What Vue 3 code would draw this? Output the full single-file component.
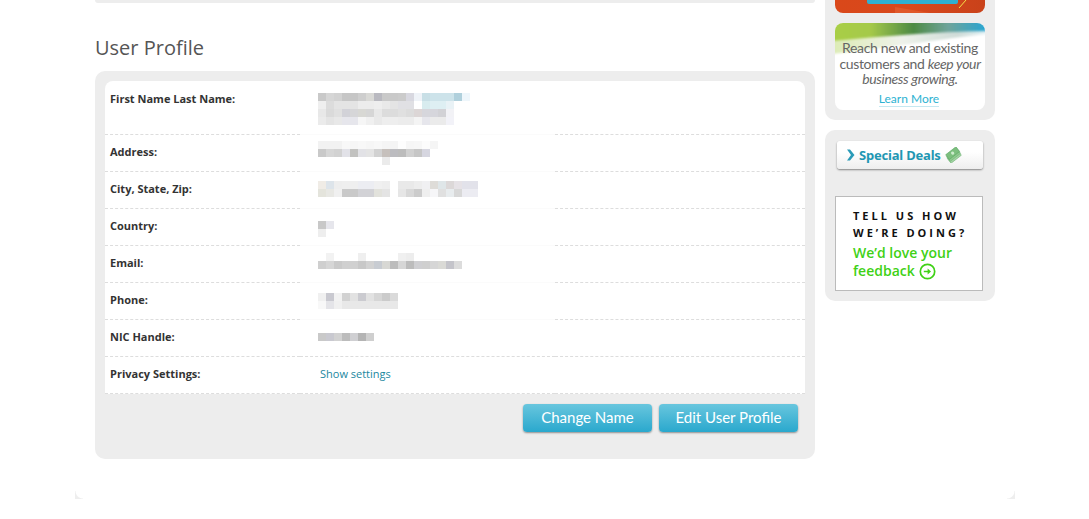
<script setup>
// blurred values are drawn as 8px mosaic cells, one string per line of cells
const cell = 8

const rows = [
  {
    label: 'First Name Last Name:',
    tall: true,
    top: 12,
    cells: [
      'c9c9c9 d6d6d6 d2d2d2 c6c6c6 c6c6c6 cecece d9d9d6 b9b9c0 c9c9c9 c9c9c9 cbcbcb d8d8e0 eff3f8 c8dfe6 cde3ea cde3ea cde3ea b0d0dc eef6fb',
      'efefef dcdcdc e4e4e4 e4e4e4 e4e4e4 ececec ececec eeeeee e9e9e9 e4e4e4 e0e0e4 e0e0e4 ffffff d8ecef deeff3 deeff3 e9f2f6',
      'e8e8e8 dadada e0e0e0 d2d2d8 d6d6d8 d8d8d4 d6d6d6 e8e8e8 dcdcdc dcdcdc e0e0e0 dcdcdc dcd6d6 d6d6dc d6d6dc d2d2d6 f2f2f6',
      'ebebeb e4e4e4 e8e8e8 e6e6ec e6e6ec f6f6f6 f0f0f0 e9e9e9 eeeeee eeeeee ececec ececec f4f4f4 e6e6ec ebebeb ebebeb f2f2f8'
    ]
  },
  {
    label: 'Address:',
    top: 6,
    cells: [
      'f2f2f2 f2f2f2 f2f2f2 f8f8f8 f6f6f6 f8f8f8 f6f6f6 f8f8f8 f5f5f5 f4f4f4 fdfdfd f6f6f6 f7f7f7 fcfcfc f5f5f5',
      'c9c9c9 d6d6d6 d2d2d2 e2e2e8 c2c2c0 e2e2e6 e4e4e4 d2d2d2 c6c0bc bcbcc0 bcbcbc d0d0d0 c6c6c6 d6d6e0',
      '- - - - - - - - ebebeb'
    ]
  },
  {
    label: 'City, State, Zip:',
    top: 9,
    cells: [
      'f0ece6 dde4ea eeeeee efefef efefef ecedf2 ecedf2 f0f0f0 eeeeee ffffff e9e9e9 e9e9e9 ededed f0f0f2 dedcd8 dfe6e8 dcd8d8 e6e2e6 e2e2ea e2e2ea',
      'e4e4dc e8e8e4 f0f0f0 c9c9c9 c9c9c9 d2d2d6 d2d2d6 e2e2dc e4e4e4 ffffff e6e6e6 d8d8d8 cccccc efefef f6f6f8 e0e0e0 e8ecee d8d8d8 ececf2 ececf2'
    ]
  },
  { label: 'Country:', top: 12, cells: ['c8c8c8 e6e6ec', 'eeeeee'] },
  {
    label: 'Email:',
    top: 7,
    cells: [
      '- f2f2f2 - - - efefef - - - - f0f0f0 ededed',
      'cfcfcf d6d6d6 cacaca d0d0d0 d0d0d0 c8c8c8 d2d2d2 c8ccd2 d8d8d4 bcbcbc d6d6d6 bcbcbc cfcfd2 cfcfcf d6d6d6 dadad6 c4c4ca dcdcdc'
    ]
  },
  {
    label: 'Phone:',
    top: 10,
    cells: [
      'f0f0f0 c9c9d0 f2f2f2 d2d2d2 e2e2e2 cbcbd0 e2e2e2 d6d6d6 cbcbcb dadada',
      'f8f8f8 e4e4e8 f0f0f0 e8e8e8 e8e8e8 e8e8e8 e8e8e8 e8e8e8 e8e8e8 e8e8e8'
    ]
  },
  { label: 'NIC Handle:', full: true, top: 13, cells: ['c9c9c9 c9c9d0 d2d2d2 bcbcbc cfcfd2 b4b4b4 cfcfcf'] },
  { label: 'Privacy Settings:', full: true, link: 'Show settings' }
]

const cellsOf = (row) => {
  const out = []
  row.cells.forEach((line, y) => {
    line.split(' ').forEach((color, x) => {
      if (color !== '-') out.push({ x: x * cell, y: row.top + y * cell, color: '#' + color })
    })
  })
  return out
}
</script>

<template>
  <div class="page">
    <div class="columns">
      <main class="main">
        <div class="panel-stub"></div>
        <h2 class="title">User Profile</h2>
        <section class="panel">
          <div class="table">
            <div v-for="row in rows" :key="row.label" class="row">
              <div class="row-body" :class="{ tall: row.tall }">
                <div class="label">{{ row.label }}</div>
                <a v-if="row.link" class="link">{{ row.link }}</a>
                <svg v-else class="mosaic" width="170" height="44" shape-rendering="crispEdges">
                  <rect v-for="c in cellsOf(row)" :key="c.x + '-' + c.y" :x="c.x" :y="c.y" width="8" height="8" :fill="c.color" />
                </svg>
              </div>
              <div class="rule">
                <span class="dash side"></span>
                <span class="dash middle" :class="{ faint: !row.full }"></span>
                <span class="dash grow"></span>
              </div>
            </div>
          </div>
          <div class="actions">
            <button class="btn first">Change Name</button>
            <button class="btn second">Edit User Profile</button>
          </div>
        </section>
      </main>

      <aside class="side-col">
        <div class="side-panel top">
          <div class="banner">
            <svg width="150" height="13" viewBox="0 0 150 13">
              <path d="M60 7 L95 13 L60 13 Z" fill="#e0582a" />
              <path d="M124 8 L131 0" stroke="#f6e24a" stroke-width="1" fill="none" />
              <rect x="32" y="-6" width="91" height="10" rx="2" fill="#2fb0d2" />
            </svg>
          </div>
          <div class="promo">
            <svg class="swoosh" width="150" height="36" viewBox="0 0 150 36">
              <defs>
                <linearGradient id="band" x1="0" x2="1" y1="0" y2="0">
                  <stop offset="0" stop-color="#a9cf45" />
                  <stop offset="0.25" stop-color="#a5c94a" />
                  <stop offset="0.52" stop-color="#4d8a44" />
                  <stop offset="0.74" stop-color="#6fa49a" />
                  <stop offset="1" stop-color="#22a5d6" />
                </linearGradient>
                <linearGradient id="fade" x1="0" x2="1" y1="0" y2="0">
                  <stop offset="0" stop-color="#dcebb4" />
                  <stop offset="0.45" stop-color="#eef2ea" />
                  <stop offset="0.8" stop-color="#cfdcd8" />
                  <stop offset="1" stop-color="#e8f4f8" />
                </linearGradient>
                <filter id="soft" x="-5%" y="-20%" width="110%" height="140%">
                  <feGaussianBlur stdDeviation="1.2" />
                </filter>
              </defs>
              <path d="M-4 14 L154 6 L154 11 C110 15 60 24 -4 31 Z" fill="url(#fade)" filter="url(#soft)" />
              <path d="M-4 -4 H154 V8 C100 9 50 13 -4 18 Z" fill="url(#band)" filter="url(#soft)" />
            </svg>
            <p class="promo-text">Reach new and existing<br>customers and <em>keep your<br>business growing.</em></p>
            <a class="learn">Learn More</a>
          </div>
        </div>

        <div class="side-panel deals-panel">
          <div class="deals">
            <svg width="9" height="12" viewBox="0 0 9 12">
              <path d="M1 0.5 L4 0.5 L8.5 6 L4 11.5 L1 11.5 L5 6 Z" fill="#2b9bb8" />
            </svg>
            <span class="deals-text">Special Deals</span>
            <svg width="17" height="16" viewBox="0 0 17 16">
              <g transform="rotate(-38 8.5 8)">
                <rect x="1.5" y="7" width="13" height="6" fill="#a4d4a4" stroke="#6fb276" stroke-width="0.6" />
                <rect x="2" y="5" width="13" height="6" fill="#8fca8e" stroke="#6fb276" stroke-width="0.6" />
                <rect x="2.5" y="3" width="13" height="6" fill="#7cbf7e" stroke="#5da765" stroke-width="0.6" />
                <circle cx="9" cy="6" r="1.6" fill="#cdeccd" />
              </g>
            </svg>
          </div>
          <div class="feedback">
            <div class="tell">TELL US HOW<br>WE’RE DOING?</div>
            <div class="love">We’d love your<br>feedback
              <svg class="go" width="17" height="17" viewBox="0 0 17 17">
                <circle cx="8.5" cy="8.5" r="7.2" fill="none" stroke="#3fd116" stroke-width="1.7" />
                <path d="M4.8 8.5 H9.5" stroke="#3fd116" stroke-width="1.5" fill="none" />
                <path d="M8.6 5.6 L12 8.5 L8.6 11.4 Z" fill="#3fd116" />
              </svg>
            </div>
          </div>
        </div>
      </aside>
    </div>
    <div class="page-foot">
      <span class="corner left"></span>
      <span class="corner right"></span>
    </div>
  </div>
</template>

<style>
html, body {
  background: #fff;
  overflow: hidden;
}
</style>

<style scoped>
.page {
  width: 940px;
  margin-left: 75px;
  font-family: "Open Sans", sans-serif;
}
.columns {
  display: flex;
  gap: 10px;
  padding: 0 20px;
}
.main {
  width: 720px;
}
.panel-stub {
  height: 3px;
  background: #ededed;
  border-radius: 0 0 8px 8px;
}
.title {
  margin: 33px 0 11px;
  font-size: 20px;
  line-height: 24px;
  font-weight: 400;
  color: #555;
}
.panel {
  height: 388px;
  box-sizing: border-box;
  padding: 10px 10px 0;
  background: #ededed;
  border-radius: 10px;
}
.table {
  background: #fff;
  border-radius: 8px 8px 0 0;
  overflow: hidden;
}
.row-body {
  display: flex;
  height: 36px;
  padding-left: 5px;
}
.row-body.tall {
  height: 53px;
}
.label {
  width: 208px;
  padding-top: 9px;
  font-size: 11px;
  line-height: 16px;
  font-weight: 700;
  color: #333;
}
.row-body.tall .label {
  padding-top: 10px;
}
.link {
  margin-left: 2px;
  padding-top: 9px;
  font-size: 11px;
  line-height: 16px;
  color: #1b87a0;
}
.mosaic {
  display: block;
}
.rule {
  display: flex;
  height: 1px;
}
.dash {
  height: 0;
  border-top: 1px dashed #ddd;
}
.side {
  width: 195px;
}
.middle {
  width: 255px;
}
.middle.faint {
  border-top: 1px solid #fbfbfb;
}
.grow {
  flex: 1;
}
.actions {
  display: flex;
  justify-content: flex-end;
  gap: 7px;
  margin-top: 10px;
  padding-right: 7px;
}
.btn {
  height: 28px;
  padding: 0 0 2px;
  border: 0;
  border-radius: 4px;
  background: linear-gradient(#68c6de, #2aa8cd);
  box-shadow: 0 1px 2px rgba(0, 0, 0, 0.4);
  color: #fff;
  font-family: Lato, sans-serif;
  font-size: 15px;
}
.first {
  width: 129px;
}
.second {
  width: 139px;
}
.side-col {
  width: 170px;
}
.side-panel {
  padding: 0 10px 10px;
  background: #ededed;
  border-radius: 0 0 10px 10px;
}
.banner {
  height: 13px;
  background: linear-gradient(90deg, #d9481a, #d8481c 50%, #c9421a);
  border-radius: 0 0 8px 8px;
  overflow: hidden;
}
.banner svg {
  display: block;
}
.promo {
  position: relative;
  height: 87px;
  margin-top: 10px;
  background: #fff;
  border-radius: 8px;
  overflow: hidden;
  text-align: center;
  font-family: Lato, sans-serif;
}
.swoosh {
  position: absolute;
  left: 0;
  top: 0;
}
.promo-text {
  position: relative;
  margin: 0;
  padding-top: 17px;
  font-size: 14px;
  line-height: 15.6px;
  letter-spacing: -0.35px;
  color: #666;
}
.learn {
  display: inline-block;
  margin-top: -1px;
  border-bottom: 1px solid #c5e8f1;
  font-size: 12px;
  line-height: 14px;
  color: #2db2d2;
  position: relative;
  left: -1px;
}
.deals-panel {
  margin-top: 10px;
  height: 171px;
  box-sizing: border-box;
  padding: 11px 10px;
  border-radius: 10px;
}
.deals {
  display: flex;
  align-items: center;
  gap: 4px;
  box-sizing: border-box;
  width: 146px;
  height: 28px;
  margin-left: 2px;
  padding-left: 9px;
  background: linear-gradient(#fff 40%, #eee);
  border-radius: 3px;
  box-shadow: 0 1px 2px rgba(0, 0, 0, 0.45);
}
.deals-text {
  font-family: "Noto Sans", sans-serif;
  font-size: 13px;
  font-weight: 700;
  color: #1f97b3;
  letter-spacing: -0.2px;
}
.feedback {
  box-sizing: border-box;
  width: 148px;
  height: 95px;
  margin-top: 27px;
  padding: 10px 0 0 17px;
  background: #fff;
  border: 1px solid #bbb;
}
.tell {
  font-size: 11px;
  line-height: 17px;
  font-weight: 700;
  letter-spacing: 3px;
  color: #111;
}
.love {
  margin-top: 3px;
  font-size: 14px;
  line-height: 18px;
  font-weight: 600;
  color: #3fd116;
}
.go {
  vertical-align: -4px;
  margin-left: 1px;
}
.page-foot {
  display: flex;
  justify-content: space-between;
  margin-top: 32px;
}
.corner {
  width: 8px;
  height: 8px;
}
.corner.left {
  background: radial-gradient(circle at 100% 0, #fff 7px, #eee 8px);
}
.corner.right {
  background: radial-gradient(circle at 0 0, #fff 7px, #eee 8px);
}
</style>
